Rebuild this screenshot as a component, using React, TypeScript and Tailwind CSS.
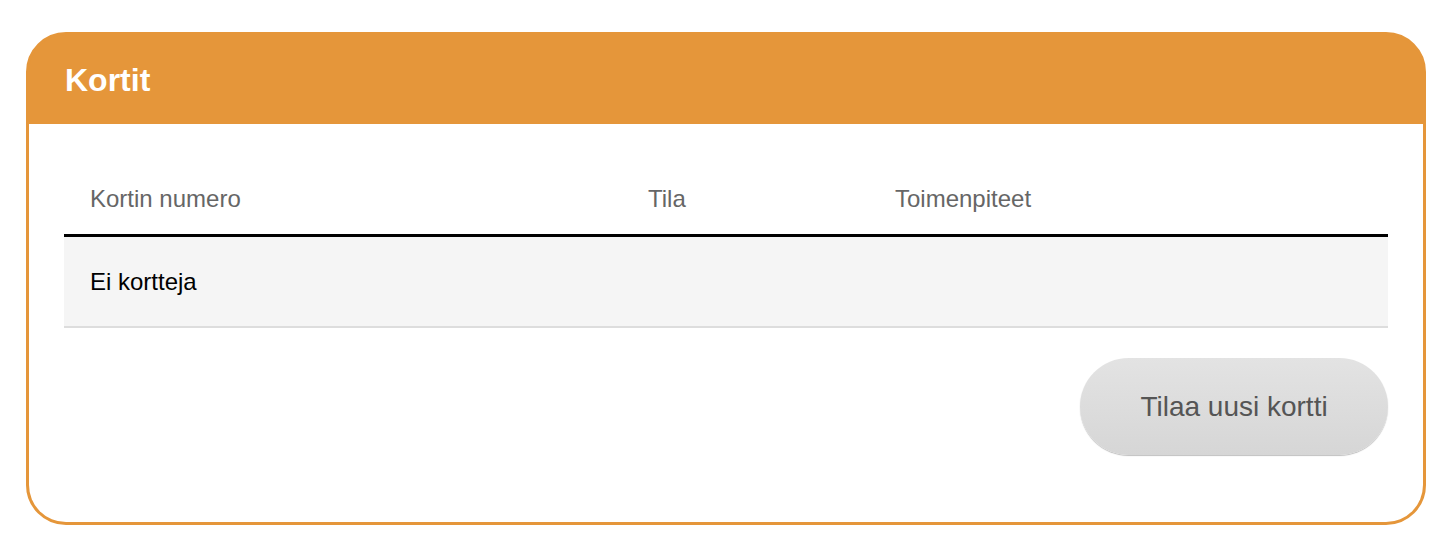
export default function App() {
  return (
    <div className="min-h-[560px] bg-white pt-[32px] pl-[26px]" style={{ fontFamily: '"Liberation Sans", Arial, sans-serif' }}>
      <div className="w-[1400px] h-[493px] border-[3px] border-[#e5963a] rounded-[40px] bg-[#e5963a] flex flex-col">
        <div className="h-[89px] flex items-center pl-[36px]">
          <h1 className="text-[32px] leading-none font-bold text-white">Kortit</h1>
        </div>
        <div className="flex-1 bg-white rounded-b-[37px] px-[35px] pt-[40px] flex flex-col">
          <div className="flex h-[70px] items-center text-[24px] text-[#666] border-b-[3px] border-black box-content">
            <div className="w-[558px] pl-[26px]">Kortin numero</div>
            <div className="w-[247px] pl-[26px]">Tila</div>
            <div className="flex-1 pl-[26px]">Toimenpiteet</div>
          </div>
          <div className="h-[89px] bg-[#f5f5f5] border-b-2 border-[#dddddd] box-content flex items-center pl-[26px] text-[24px] text-black">
            Ei kortteja
          </div>
          <div className="flex justify-end mt-[30px]">
            <button className="w-[308px] h-[97px] rounded-full bg-gradient-to-b from-[#e3e3e3] to-[#d6d6d6] shadow-[0_1px_1px_rgba(0,0,0,0.25)] text-[28px] text-[#555]">
              Tilaa uusi kortti
            </button>
          </div>
        </div>
      </div>
    </div>
  );
}
